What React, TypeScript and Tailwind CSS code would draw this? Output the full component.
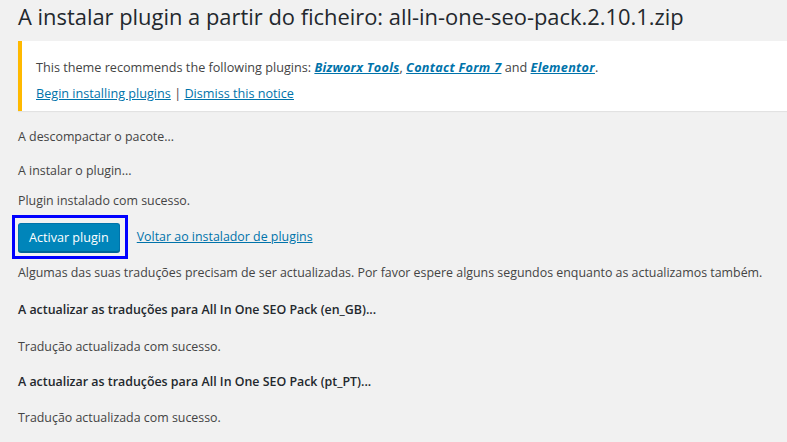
import React from 'react'

const font = { fontFamily: '"Open Sans", "Noto Sans", sans-serif' }

const Line = ({ children, className = '' }: any) => (
  <p className={`h-[20px] leading-[20px] text-[12.4px] text-[#444] whitespace-nowrap ${className}`}>{children}</p>
)

const App = () => {
  return (
    <div className="w-[787px] h-[442px] overflow-hidden bg-[#f1f1f1] pl-[18px]" style={font}>
      <h1 className="h-[41px] pt-[2px] text-[21.9px] leading-[30px] text-[#23282d] font-normal whitespace-nowrap">
        A instalar plugin a partir do ficheiro: all-in-one-seo-pack.2.10.1.zip
      </h1>

      <div className="h-[70px] bg-white border-l-4 border-[#ffb900] shadow-[0_1px_1px_rgba(0,0,0,0.06)] pl-[14px] pt-[16px] text-[12.65px] leading-[20px] text-[#444] whitespace-nowrap">
        <p>
          This theme recommends the following plugins:{' '}
          <a className="font-bold italic tracking-[0.3px] text-[#0073aa] underline">Bizworx Tools</a>,{' '}
          <a className="font-bold italic tracking-[0.3px] text-[#0073aa] underline">Contact Form 7</a> and{' '}
          <a className="font-bold italic tracking-[0.3px] text-[#0073aa] underline">Elementor</a>.
        </p>
        <p className="mt-[6px]">
          <a className="text-[#0073aa] underline">Begin installing plugins</a> |{' '}
          <a className="text-[#0073aa] underline">Dismiss this notice</a>
        </p>
      </div>

      <Line className="mt-[16px]">A descompactar o pacote...</Line>
      <Line className="mt-[14px]">A instalar o plugin...</Line>
      <Line className="mt-[10px]">Plugin instalado com sucesso.</Line>

      <div className="mt-[12px] flex items-center h-[29px]">
        <div className="relative">
          <button className="h-[29px] px-[10px] rounded-[3px] bg-[#0085ba] border border-[#0073aa] border-b-[#006799] shadow-[0_1px_0_#006799] text-white text-[12.6px] leading-[26px] whitespace-nowrap">
            Activar plugin
          </button>
          <div className="absolute left-[-6px] right-[-8px] top-[-8px] bottom-[-7px] border-[3px] border-[#0000ff]" />
        </div>
        <a className="ml-[17px] text-[12.4px] text-[#0073aa] underline whitespace-nowrap">Voltar ao instalador de plugins</a>
      </div>

      <Line className="mt-[11px]">
        Algumas das suas traduções precisam de ser actualizadas. Por favor espere alguns segundos enquanto as actualizamos também.
      </Line>
      <Line className="mt-[17px] font-semibold text-[#23282d]">A actualizar as traduções para All In One SEO Pack (en_GB)...</Line>
      <Line className="mt-[17px]">Tradução actualizada com sucesso.</Line>
      <Line className="mt-[15px] font-semibold text-[#23282d]">A actualizar as traduções para All In One SEO Pack (pt_PT)...</Line>
      <Line className="mt-[16px]">Tradução actualizada com sucesso.</Line>
    </div>
  )
}

export default App
